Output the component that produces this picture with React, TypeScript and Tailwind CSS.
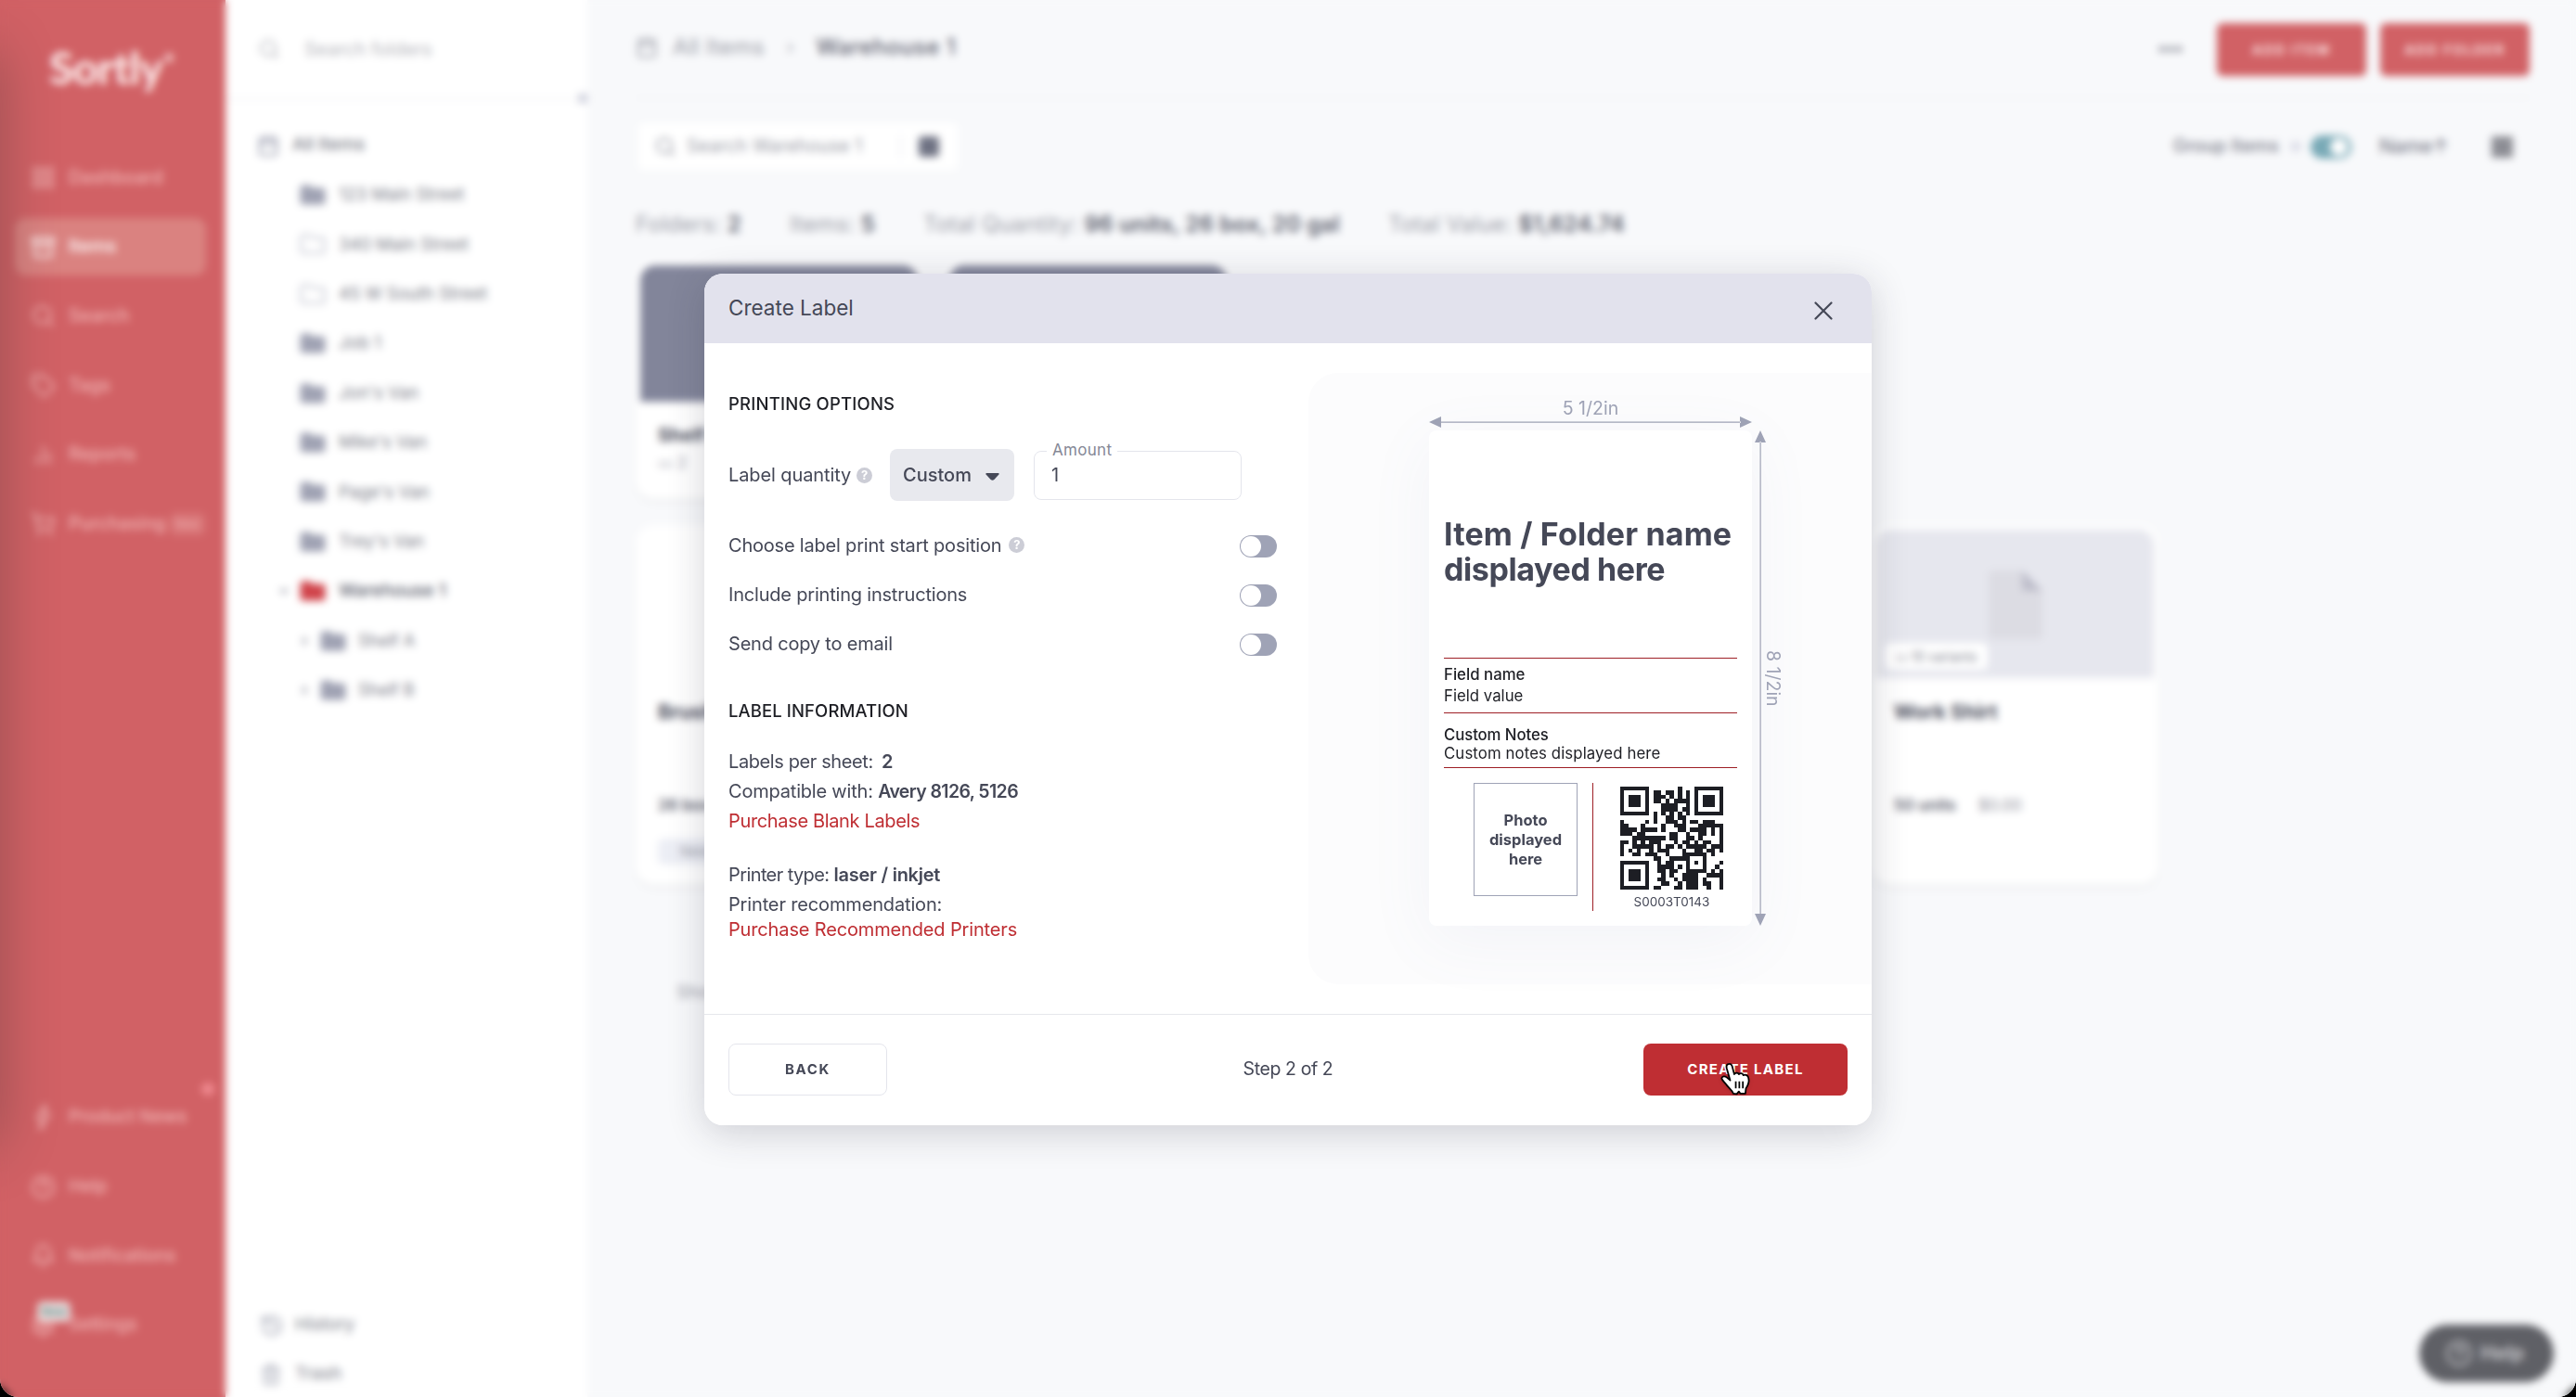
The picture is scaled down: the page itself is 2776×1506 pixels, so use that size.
import type { ReactNode } from 'react'
import { LuArchive, LuBell, LuCalendar, LuChartNoAxesColumn, LuCircleHelp, LuHistory, LuLayoutGrid, LuSearch, LuShoppingCart, LuTag, LuTrash2, LuSettings } from 'react-icons/lu'

const mainNav = [
  { label: 'Dashboard', icon: LuLayoutGrid },
  { label: 'Items', icon: LuArchive, active: true },
  { label: 'Search', icon: LuSearch },
  { label: 'Tags', icon: LuTag },
  { label: 'Reports', icon: LuChartNoAxesColumn },
  { label: 'Purchasing', icon: LuShoppingCart, badge: 'New' },
]

const footerNav = [
  { label: 'Product News', icon: Bolt, dot: true },
  { label: 'Help', icon: LuCircleHelp },
  { label: 'Notifications', icon: LuBell },
  { label: 'Settings', icon: LuSettings, tag: 'New' },
]

const folders = [
  { name: '123 Main Street' },
  { name: '340 Main Street', empty: true },
  { name: '45 W South Street', empty: true },
  { name: 'Job 1' },
  { name: "Jon's Van" },
  { name: "Mike's Van" },
  { name: "Page's Van" },
  { name: "Trey's Van" },
]

const qrRows = [
  '#######.......#...#######',
  '#.....#.##.##.#.#.#.....#',
  '#.###.#.###.#.#.#.#.###.#',
  '#.###.#.##.#.####.#.###.#',
  '#.###.#...####..#.#.###.#',
  '#.....#...####.##.#.....#',
  '#######.#.#.#.#.#.#######',
  '........#..##.##.........',
  '#.....#.#..###.#.##.###..',
  '##...#....#..###...######',
  '####.####.#...##.####.#.#',
  '###.##......##..#..##.#.#',
  '...########.##..##.#....#',
  '##.#.#.###...#.##.#.##..#',
  '#..#####.#.##.#.#####.###',
  '#.#.#..#.###...#..##.##.#',
  '#..##.###..#...######.#..',
  '........##..#####...#....',
  '#######..#.##...#.#.#...#',
  '#.....#..####.#.#...#..#.',
  '#.###.#..##.##..#####.#.#',
  '#.###.#...#.#..####..####',
  '#.###.#..##..#.####.#...#',
  '#.....#...##..#.###.##..#',
  '#######.##...##.###..#..#',
]

function Bolt({ className }: { className?: string }) {
  return (
    <svg viewBox="0 0 24 24" fill="none" stroke="currentColor" strokeWidth="2" strokeLinejoin="round" className={className}>
      <path d="M15 -2L6 13h5L8 26 18 9h-5z" />
    </svg>
  )
}

function Folder({ className, empty }: { className: string; empty?: boolean }) {
  return (
    <svg width="28" height="22" viewBox="0 0 28 22" className={className}>
      <path d="M1.5 3.5a2 2 0 0 1 2-2h7l3 3h11a2 2 0 0 1 2 2v12a2 2 0 0 1-2 2h-21a2 2 0 0 1-2-2z" fill={empty ? 'none' : 'currentColor'} stroke="currentColor" strokeWidth="2" />
    </svg>
  )
}

function Chevron({ down }: { down?: boolean }) {
  return (
    <svg width="12" height="12" viewBox="0 0 12 12" fill="none" stroke="#8d8f9c" strokeWidth="2">
      <path d={down ? 'M2 4l4 4 4-4' : 'M4 2l4 4-4 4'} />
    </svg>
  )
}

function Sidebar() {
  return (
    <aside className="flex w-[243px] shrink-0 flex-col bg-[#d16165] text-[#f0b4b4]">
      <div className="flex h-[154px] items-start pl-[53px] pt-[43px]">
        <span className="font-['Lato'] text-[48px] font-black leading-[60px] tracking-[-1px] text-[#fbe6e6]">Sortly</span>
        <span className="mt-2.5 text-[26px] font-bold leading-7 text-[#f6d2d2]">*</span>
      </div>
      <nav className="flex flex-col pl-4">
        {mainNav.map(({ label, icon: Icon, active, badge }) => (
          <div key={label} className="flex h-[74.7px] w-[208px] items-center">
            <div className={`flex h-[62px] w-[206px] items-center rounded-xl pl-[17px] ${active ? 'bg-[#da8280] text-white' : ''}`}>
              <Icon className="size-[27px]" />
              <span className="ml-[14px] text-[19.5px] font-medium">{label}</span>
              {badge && <span className="ml-1 flex h-6 w-[38px] items-center justify-center rounded-md bg-[#d97678] text-[12px]">{badge}</span>}
            </div>
          </div>
        ))}
      </nav>
      <div className="mb-10 mt-auto flex flex-col pl-[33px]">
        {footerNav.map(({ label, icon: Icon, dot, tag }) => (
          <div key={label} className="relative flex h-[74.7px] items-center">
            <Icon className="size-[27px]" />
            <span className="ml-[14px] text-[19px] font-medium">{label}</span>
            {dot && <span className="absolute right-[12px] top-0 size-3.5 rounded-full bg-[#f08a90]" />}
            {tag && <span className="absolute left-[7px] top-[12px] flex h-[22px] w-[36px] items-center justify-center rounded-md bg-[#eadada] text-[12px] font-bold text-[#5f9490]">{tag}</span>}
          </div>
        ))}
      </div>
    </aside>
  )
}

function FolderTree() {
  return (
    <section className="flex w-[390px] shrink-0 flex-col bg-white text-[20px] text-[#7b7d88]">
      <div className="flex h-[107px] items-center border-b border-[#e9eaee] pl-[35px] text-[#b4b5bb]">
        <LuSearch className="size-6" />
        <span className="ml-[26px] text-[20px]">Search folders</span>
        <span className="ml-auto mt-[106px] size-2.5 bg-[#d0d2de]" />
      </div>
      <div className="mt-[23px] flex h-[53.4px] items-center pl-[34px]">
        <LuCalendar className="size-6 text-[#8d90a4]" />
        <span className="ml-[14px] text-[19px] font-medium">All Items</span>
      </div>
      {folders.map((f) => (
        <div key={f.name} className="flex h-[53.4px] items-center pl-[80px]">
          <Folder empty={f.empty} className={f.empty ? 'text-[#bcbecb]' : 'text-[#9fa2b3]'} />
          <span className="ml-[14px] text-[18.5px]">{f.name}</span>
        </div>
      ))}
      <div className="flex h-[53.4px] items-center pl-[57px]">
        <Chevron down />
        <Folder className="ml-[11px] text-[#d0434a]" />
        <span className="ml-[14px] text-[19px] font-medium text-[#5a5d6b]">Warehouse 1</span>
      </div>
      {['Shelf A', 'Shelf B'].map((name) => (
        <div key={name} className="flex h-[53.4px] items-center pl-[79px]">
          <Chevron />
          <Folder className="ml-[11px] text-[#9fa2b3]" />
          <span className="ml-[13px] text-[18px]">{name}</span>
        </div>
      ))}
      <div className="mt-auto flex flex-col">
        <div className="flex h-[53px] items-center pl-[37px] pt-1">
          <LuHistory className="size-[26px] text-[#a3a6b4]" />
          <span className="ml-[12px] text-[19px]">History</span>
        </div>
        <div className="flex h-[53px] items-center pl-[37px] pt-1">
          <LuTrash2 className="size-6 text-[#a3a6b4]" />
          <span className="ml-[14px] text-[19px]">Trash</span>
        </div>
      </div>
    </section>
  )
}

function Stat({ label, value }: { label: string; value: string }) {
  return (
    <span>
      {label}: <b className="font-semibold text-[#5a5d6b]">{value}</b>
    </span>
  )
}

function ShelfCard({ name }: { name: string }) {
  return (
    <div className="h-[257px] w-[309px] rounded-[20px] bg-white p-[5px] shadow-md shadow-black/5">
      <div className="h-[147px] rounded-t-[16px] bg-[#82859a]" />
      <div className="mt-5 pl-[19px] text-[20px] font-bold leading-8 text-[#4a4d5c]">{name}</div>
      <div className="pl-[19px] text-[17px] leading-7 text-[#a0a2ae]">▭ 2</div>
    </div>
  )
}

function ItemCard({ name, units, price, children }: { name: string; units: string; price?: string; children?: ReactNode }) {
  return (
    <div className="h-[388px] w-[309px] rounded-[20px] bg-white p-[5px] shadow-md shadow-black/5">
      {children ?? <div className="h-[160px]" />}
      <div className="mt-5 pl-[19px] text-[21.500px] font-bold leading-8 text-[#4a4d5c]">{name}</div>
      <div className="mt-[69px] flex gap-6 pl-[19px] text-[17px] leading-8 text-[#8f919c]">
        <span className="font-semibold text-[#5d606e]">{units}</span>
        {price && <span>{price}</span>}
      </div>
      {!children && <div className="ml-[19px] mt-5 h-7 w-24 rounded-md bg-[#eceef5] pl-6 text-[15px] leading-7">Need</div>}
    </div>
  )
}

function Workspace() {
  return (
    <main className="flex grow flex-col bg-[#f8f9fb] pl-[52px] text-[#9a9ca6]">
      <div className="mr-[50px] flex h-[106px] items-center border-b border-[#ecedf1] text-[24px]">
        <LuCalendar className="-mt-1 size-6 text-[#9a9ca6]" />
        <span className="-mt-1 ml-[16px] tracking-[0.2px]">All Items</span>
        <span className="-mt-1 ml-6 mr-6 text-[20px]">›</span>
        <span className="-mt-1 font-medium tracking-[0.4px] text-[#5d606e]">Warehouse 1</span>
        <span className="ml-auto flex gap-[3px]">
          {[0, 1, 2].map((i) => <span key={i} className="size-[6px] rounded-full bg-[#7b7d8a]" />)}
        </span>
        <span className="ml-[38px] mt-0.5 flex h-[57px] w-[161px] items-center justify-center rounded-md bg-[#d16165] text-[14px] font-bold tracking-[2px] text-[#fbe3e3]">ADD ITEM</span>
        <span className="ml-[15px] mt-0.5 flex h-[57px] w-[161px] items-center justify-center rounded-md bg-[#d16165] text-[14px] font-bold tracking-[2px] text-[#fbe3e3]">ADD FOLDER</span>
      </div>
      <div className="mt-[27px] flex h-[50px] items-center">
        <div className="ml-[3px] flex h-[50px] w-[344px] items-center rounded-md bg-white pl-[17px] text-[19.5px]">
          <LuSearch className="size-6" />
          <span className="ml-[11px] tracking-[0.1px]">Search Warehouse 1</span>
          <span className="ml-auto h-6 w-px bg-[#dcdde4]" />
          <span className="ml-[19px] mr-[20px] size-[22px] rounded-sm bg-[#6f7283]" />
        </div>
        <span className="ml-auto text-[19.5px] font-medium text-[#7b7d8a]">Group Items</span>
        <span className="ml-3 size-3 rounded-full bg-[#dcdde8]" />
        <span className="ml-[10px] flex h-[25px] w-[44px] items-center justify-end rounded-full bg-[#78a9b6] p-1">
          <span className="size-[19px] rounded-full bg-white" />
        </span>
        <span className="ml-[30px] text-[21px] font-medium tracking-[-0.3px] text-[#7b7d8a]">Name↑</span>
        <span className="ml-[46px] mr-[68px] size-[23px] bg-[#8c8d94]" />
      </div>
      <div className="mt-[43px] flex h-8 items-center gap-[52px] text-[24px] tracking-[0.15px]">
        <Stat label="Folders" value="2" />
        <Stat label="Items" value="5" />
        <Stat label="Total Quantity" value="96 units, 26 box, 20 gal" />
        <Stat label="Total Value" value="$1,624.74" />
      </div>
      <div className="mt-[23px] flex gap-[24px]">
        <ShelfCard name="Shelf A" />
        <ShelfCard name="Shelf B" />
      </div>
      <div className="mt-[28px] flex gap-[24px]">
        <ItemCard name="Brush" units="26 box" />
        <div className="w-[309px]" />
        <div className="w-[309px]" />
        <div className="w-[309px]" />
        <ItemCard name="Work Shirt" units="50 units" price="$0.00">
          <div className="relative flex h-[160px] justify-center rounded-t-[16px] bg-[#e6e7ee] pt-11">
            <svg width="58" height="74" viewBox="0 0 58 74">
              <path d="M4 0h32l22 22v48a4 4 0 0 1-4 4H4a4 4 0 0 1-4-4V4a4 4 0 0 1 4-4z" fill="#dcdce3" />
              <path d="M36 0l22 22H40a4 4 0 0 1-4-4z" fill="#bdbdca" />
            </svg>
            <span className="absolute bottom-[9px] left-[9px] flex h-[29px] w-[111px] items-center justify-center rounded-md bg-white text-[14px] text-[#7b7d8a]">▭ 10 variants</span>
          </div>
        </ItemCard>
      </div>
      <div className="mt-[100px] pl-[44px] text-[19px] leading-8">Showing</div>
    </main>
  )
}

function HelpMark() {
  return (
    <span className="flex size-[17px] items-center justify-center rounded-full bg-[#cccdd6] text-[13px] font-bold leading-none text-white">?</span>
  )
}

function ToggleRow({ label, help }: { label: string; help?: boolean }) {
  return (
    <div className="flex h-[53px] items-center">
      <span className="mr-[8px]">{label}</span>
      {help && <HelpMark />}
      <span className="ml-auto mt-[2px] flex h-6 w-10 items-center rounded-full bg-[#9fa3b6] p-px">
        <span className="size-[22px] rounded-full bg-white" />
      </span>
    </div>
  )
}

function PrintingOptions() {
  return (
    <div className="flex w-[591px] flex-col pt-[51px] text-[20px] tracking-[-0.2px] text-[#454857]">
      <h3 className="h-7 text-[18.5px] font-medium leading-7 tracking-[0.2px] text-[#1d1e24]">PRINTING OPTIONS</h3>
      <div className="mt-[35px] flex h-14 items-center">
        <span className="w-[138px] tracking-[-0.1px]">Label quantity</span>
        <HelpMark />
        <button className="ml-[19px] flex h-14 w-[134px] items-center justify-between rounded-lg bg-[#e8e9ee] pl-[14px] pr-4 font-medium tracking-normal">
          Custom
          <svg width="15" height="8" viewBox="0 0 15 8" fill="#454857" className="mt-1"><path d="M1 0h13q1.200 .6.400 1.600l-5 5.400q-1.900 1.600-3.800 0l-5-5.400Q-.2.600 1 0z" /></svg>
        </button>
        <div className="relative ml-[21px] flex h-[53px] w-[224px] items-center rounded-lg border border-[#e4e5ec] pl-[18px]">
          1
          <span className="absolute left-[13px] top-[-14px] bg-white px-1.5 text-[17px] leading-6 tracking-[0.3px] text-[#858896]">Amount</span>
        </div>
      </div>
      <div className="mt-[21px]">
        <ToggleRow label="Choose label print start position" help />
        <ToggleRow label="Include printing instructions" />
        <ToggleRow label="Send copy to email" />
      </div>
      <h3 className="mt-[32px] h-7 text-[18.5px] font-medium leading-7 tracking-[0.1px] text-[#1d1e24]">LABEL INFORMATION</h3>
      <div className="mt-[25px] leading-8">
        <p className="tracking-[-0.4px]">Labels per sheet: <b className="ml-1 font-semibold">2</b></p>
        <p>Compatible with: <b className="text-[19.500px] font-semibold tracking-[-0.6px]">Avery 8126, 5126</b></p>
        <p className="tracking-[-0.35px] text-[#bf2e33]">Purchase Blank Labels</p>
      </div>
      <div className="mt-[26px] leading-8">
        <p className="tracking-[-0.6px]">Printer type: <b className="font-semibold tracking-[-0.25px]">laser / inkjet</b></p>
        <p className="tracking-[-0.15px]">Printer recommendation:</p>
        <p className="-mt-0.5 leading-[26px] tracking-[-0.15px] text-[#bf2e33]">Purchase Recommended Printers</p>
      </div>
    </div>
  )
}

function QrCode() {
  return (
    <svg width="111" height="111" viewBox="0 0 25 25" shapeRendering="crispEdges" fill="#1d1e24">
      {qrRows.map((row, y) =>
        row.split('').map((cell, x) => cell === '#' && <rect key={`${x}-${y}`} x={x} y={y} width="1" height="1" />)
      )}
    </svg>
  )
}

function LabelPreview() {
  return (
    <div className="ml-auto mt-8 h-[659px] w-[607px] rounded-l-[32px] bg-[#fcfcfd] pl-[130px] pt-[26px]">
      <div className="flex w-[348px] flex-col items-center text-[#9fa3b6]">
        <span className="h-[20px] text-[19.500px] leading-6">5 1/2in</span>
        <svg width="348" height="14" viewBox="0 0 348 14" fill="currentColor" className="mb-[2px]">
          <path d="M0 7L13 1v12zM348 7L335 1v12zM12 6.500h324v1.200H12z" />
        </svg>
      </div>
      <div className="flex">
        <div className="flex h-[534px] w-[348px] flex-col rounded-lg bg-white px-4 pt-[93px] text-[16.800px] text-[#1d1e24] shadow-[0_16px_70px_rgba(120,130,170,0.07)]">
          <h2 className="whitespace-nowrap text-[34px] font-bold leading-[38px] tracking-[0.15px] text-[#454857]">
            Item / Folder name
            <br />
            <span className="tracking-[-0.4px]">displayed here</span>
          </h2>
          <div className="mt-[76px] h-[59px] border-t border-[#9e1f26] pt-[6px] leading-[23px]">
            <p className="font-medium">Field name</p>
            <p>Field value</p>
          </div>
          <div className="h-[60px] border-y border-[#9e1f26] pt-[14px] leading-[19.500px]">
            <p className="font-medium tracking-[-0.1px]">Custom Notes</p>
            <p className="tracking-[0.1px]">Custom notes displayed here</p>
          </div>
          <div className="mt-4 flex">
            <div className="ml-8 flex h-[122px] w-[112px] items-center justify-center border border-[#9fa3b6] text-center text-[16.500px] font-bold leading-[21px] text-[#454857]">
              Photo<br />displayed<br />here
            </div>
            <div className="ml-4 h-[138px] w-px bg-[#9e1f26]" />
            <div className="ml-[29px] flex flex-col items-center pt-[4px]">
              <QrCode />
              <span className="mt-[2px] text-[13.500px] leading-[22px] text-[#454857]">S0003T0143</span>
            </div>
          </div>
        </div>
        <div className="flex items-center text-[#9fa3b6]">
          <svg width="16" height="534" viewBox="0 0 16 534" className="ml-[1px]" fill="currentColor">
            <path d="M8 0L2 13h12zM8 534L2 521h12zM7.500 12h1.200v510H7.500z" />
          </svg>
          <span className="-ml-[6px] text-[19.500px] leading-6 [writing-mode:vertical-rl]">8 1/2in</span>
        </div>
      </div>
    </div>
  )
}

function CreateLabelModal() {
  return (
    <div className="flex h-[918px] w-[1258px] flex-col overflow-hidden rounded-[20px] bg-white">
      <header className="flex h-[75px] items-center justify-between bg-[#e2e2ed] pl-[26px] pr-[42px] text-[#454857]">
        <h1 className="-mt-0.5 text-[22.500px]">Create Label</h1>
        <svg width="20" height="20" viewBox="0 0 20 20" className="mt-[5px]" fill="none" stroke="currentColor" strokeWidth="2.200" strokeLinecap="round"><path d="M1.500 1.500l17 17m0-17l-17 17" /></svg>
      </header>
      <div className="flex h-[723px] pl-[26px]">
        <PrintingOptions />
        <LabelPreview />
      </div>
      <footer className="flex grow items-center justify-between border-t border-[#e6e7ec] px-[26px] pb-[2px] text-[#454857]">
        <button className="h-14 w-[171px] rounded-lg border border-[#e4e5ec] pt-px text-[15px] font-bold tracking-[1.700px]">BACK</button>
        <span className="ml-[49px] pt-px text-[19.500px] tracking-[-0.4px]">Step 2 of 2</span>
        <button className="relative h-14 w-[220px] rounded-lg bg-[#bf2e33] pt-px text-[15px] font-bold tracking-[1.300px] text-white">
          CREATE LABEL
          <svg width="34" height="36" viewBox="0 0 30 33" className="absolute left-[82px] top-[20px] drop-shadow" fill="#fff" stroke="#000" strokeWidth="1.600" strokeLinejoin="round">
            <path d="M8 2c2-1 3.500.5 4 2.500L14 12c1.500-2 4-1.500 4.500 0 1.500-1.500 4-1 4.500 1 2-1 4.500 0 5 2.500 1 3.500-.5 7.500-2.500 10.500L25 31h-5l-1.500-2-2 2.500L13 31c-1-3-5-6-7-9-1.500-2-4-4-4.500-6 .5-2 3-2.500 5-1L10 18 6.500 6C6 4 6.500 2.500 8 2z" />
            <path d="M15.500 19v7M19 19v7M22.500 19v7" />
          </svg>
        </button>
      </footer>
    </div>
  )
}

export default function App() {
  return (
    <div className="h-[1506px] w-[2776px] bg-black">
      <div className="relative flex h-full overflow-hidden rounded-b-[20px] bg-[#f8f9fb] font-['Inter',sans-serif]">
        <Sidebar />
        <FolderTree />
        <Workspace />
        <div className="absolute bottom-[16px] right-[24px] flex h-[62px] w-[145px] items-center rounded-full bg-[#5f6066] pl-[28px] text-[21px] font-bold text-[#c3c3c7]">
          <LuCircleHelp className="mr-2 size-[30px]" />
          Help
        </div>
        <div className="absolute left-[-60px] top-[50px] h-[1190px] w-[60px] rounded-full shadow-[0_0_60px_rgba(60,50,50,0.4)]" />
        <div className="absolute inset-0 backdrop-blur-[4.500px]" />
        <div className="absolute left-[759px] top-[295px] rounded-[20px] shadow-[0_8px_40px_rgba(40,40,60,0.2)]">
          <CreateLabelModal />
        </div>
      </div>
    </div>
  )
}
